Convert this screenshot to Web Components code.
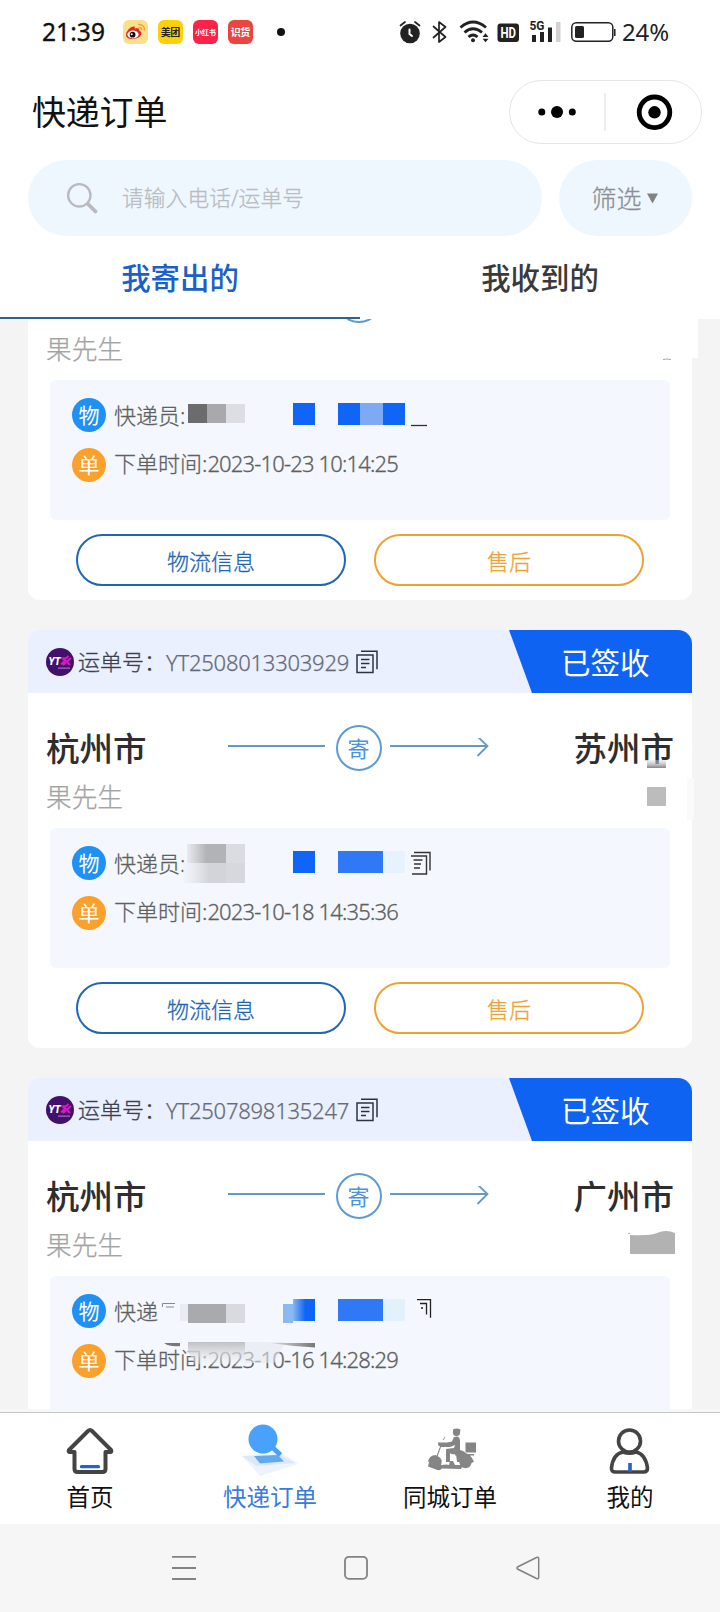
<!DOCTYPE html>
<html lang="zh-CN">
<head>
<meta charset="utf-8">
<title>快递订单</title>
<style>
html,body{margin:0;padding:0;background:#fff}
body{width:720px;height:1612px;overflow:hidden;font-family:"Noto Sans","Noto Sans CJK SC",sans-serif;color:#333}
</style>
</head>
<body>
<express-app></express-app>
<script>
const define=(name,css,html,setup)=>{
  const tpl=document.createElement('template');
  customElements.define(name,class extends HTMLElement{
    connectedCallback(){
      if(this.shadowRoot)return;
      const root=this.attachShadow({mode:'open'});
      tpl.innerHTML='<style>*{box-sizing:border-box}svg{display:block}'+css+'</style>'+(typeof html==='function'?html(this):html);
      root.appendChild(tpl.content.cloneNode(true));
      if(setup)setup(this,root);
    }
  });
};
const at=(el,n)=>el.getAttribute(n)||'';

/* small square launcher icon in the notification area */
define('app-badge',`
:host{display:flex;width:24.5px;height:24px;border-radius:6px;align-items:center;justify-content:center;overflow:hidden;
font:700 10px/24px "Noto Sans CJK SC",sans-serif;white-space:nowrap;letter-spacing:-.4px}`,'<slot></slot>');

define('status-bar',`
:host{display:flex;height:64px;padding:0 50px 0 42px;align-items:center;color:#111}
.time{font-size:24.5px;line-height:64px;width:64px;-webkit-text-stroke:.35px}
.apps{display:flex;gap:10.5px;margin-left:17px}
.dot{width:8px;height:8px;border-radius:50%;background:#111;margin-left:24px}
.sys{display:flex;align-items:center;margin-left:auto}
.sys svg{margin-right:-4px}
.pct{font-size:24px;line-height:64px;color:#222;width:48px}
`,`
<span class="time"><fit-text width="63">21:39</fit-text></span>
<div class="apps">
<app-badge style="background:#fbe08b"><svg width="24" height="24" viewBox="0 0 24 24"><path d="M3 15c0-4 5-9 8-8.500 1 .2 1 1.500.7 2.300 3-1 5-.5 4.700 2 3 1.500 2.300 4 .6 5.700-3 3-14 4-14-1.500z" fill="#d92a25"/><ellipse cx="10" cy="14.500" rx="5.600" ry="3.900" fill="#fff"/><circle cx="9.600" cy="14.700" r="2.900" fill="#111"/><circle cx="8.700" cy="14.200" r="1" fill="#fff"/><path d="M15.500 7.500c2-.3 3.300 1 3 3M15 4.500c4-.7 7 2 6.300 6" fill="none" stroke="#f0a33a" stroke-width="1.500"/></svg></app-badge>
<app-badge style="background:#fdd106;color:#222">美团</app-badge>
<app-badge style="background:#fb2448;color:#fff;font-size:7.200px">小红书</app-badge>
<app-badge style="background:#ea453e;color:#fff">识货</app-badge>
</div>
<span class="dot"></span>
<div class="sys">
<svg width="227" height="24" viewBox="400 20 227 24">
<circle cx="411" cy="33.500" r="9.800" fill="#222"/>
<g fill="none" stroke="#222" stroke-width="1.700" stroke-linecap="round"><path d="M401.500 25.500l4.500-3.500M416 22l4.500 3.500"/><path d="M410.500 29.500v4.500l2.500 2" stroke="#fff" stroke-width="2"/><path d="M434.500 26.500l12 10.500-6.500 5V22l6.500 5-12 10.500" stroke-linejoin="round"/></g>
<g fill="none" stroke="#222" stroke-width="2.900"><path d="M461.500 27.500q12.500-11 25.500 0M465.500 32.500q8.500-7.500 17.500 0M469.500 37q4.500-4 9 0"/></g>
<circle cx="474" cy="40.300" r="2" fill="#222"/><path d="M483.500 37l3-3.800 3 3.800zM483.500 38.800h6l-3 3.500z" fill="#222"/>
<rect x="498.500" y="23.500" width="21.500" height="18.500" rx="3" fill="#222"/>
<text x="509.200" y="37.700" font-family="Roboto" font-size="14" font-weight="700" fill="#fff" text-anchor="middle" textLength="15.500" lengthAdjust="spacingAndGlyphs">HD</text>
<text x="530.500" y="30" font-family="Roboto" font-size="12.500" font-weight="700" fill="#222" textLength="15" lengthAdjust="spacingAndGlyphs">5G</text>
<g fill="#222"><rect x="533" y="35" width="4" height="7"/><rect x="541" y="32" width="4" height="10"/><rect x="549" y="27.500" width="4" height="14.500"/></g><rect x="557" y="22" width="4.500" height="20" fill="#d2d2d2"/>
<rect x="572.800" y="22.800" width="41" height="18.400" rx="4.500" fill="none" stroke="#222" stroke-width="1.500"/><rect x="576" y="26" width="9" height="12" rx="1.500" fill="#222"/><path d="M615.800 29v7" stroke="#222" stroke-width="1.500"/>
</svg>
<span class="pct"><fit-text width="47">24%</fit-text></span>
</div>`);

define('title-bar',`
:host{display:flex;height:96px;padding:16px 18px 0 32px;justify-content:space-between;align-items:flex-start;color:#111}
h1{margin:0;font-weight:400;font-size:34px;line-height:65px;letter-spacing:-.2px}
.capsule{width:193px;height:64px;border:1px solid #e6e6e6;border-radius:32px}`,`
<h1>快递订单</h1>
<svg class="capsule" viewBox="510.500 81 191 62"><g fill="#000"><circle cx="542.300" cy="112" r="3.500"/><circle cx="557.500" cy="112" r="6"/><circle cx="572.800" cy="112" r="3.500"/><circle cx="655" cy="112.300" r="6.200"/></g><path d="M605.500 93v38" stroke="#ddd"/><circle cx="655" cy="112.300" r="15.300" fill="none" stroke="#000" stroke-width="4.800"/></svg>`);

define('search-row',`
:host{display:flex;height:76px;margin:0 28px;gap:17px}
div{display:flex;align-items:center;background:#eff7fe;border-radius:38px;height:76px}
.q{flex:1;padding-left:37px;color:#b9bcc2;font-size:21.7px;font-weight:300;-webkit-text-stroke:.3px}
.q span{margin:-4px 0 0 23px}
.f{width:133px;justify-content:center;color:#8b8f94;font-size:25px;gap:5px;font-weight:300;-webkit-text-stroke:.3px}
.f span{margin-top:-3px}
.f svg{margin-right:2px}`,`
<div class="q"><svg width="34" height="34" viewBox="65 180 34 34" fill="none" stroke="#b9b9be"><circle cx="79.300" cy="194.300" r="11.200" stroke-width="2.300"/><path d="M88 203l7.500 7.500" stroke-width="3.800" stroke-linecap="round"/></svg><span><fit-text width="182">请输入电话/运单号</fit-text></span></div>
<div class="f"><span>筛选</span><svg width="11" height="11"><path d="M0 0.500h11L5.500 10.500z" fill="#808285"/></svg></div>`);

define('order-tabs',`
:host{display:flex;height:83px}
div{flex:1;text-align:center;font-size:29.4px;line-height:84px;height:83px;border-bottom:2.500px solid transparent;font-weight:500;color:#3a3a3a}
div.on{color:#1b5fc8;border-color:#2a6394}`,
`<div class="on">我寄出的</div><div>我收到的</div>`);

/* stacked-sheets copy glyph */
const copyIcon=`<svg width="22" height="24" viewBox="0 0 22 24" fill="none" stroke="#2c3440" stroke-width="1.500"><path d="M5 1.200h16v18M1 5h16v17.500H1zM5 9.500h8.500M5 13.500h8.500M5 17.500h5"/></svg>`;

define('parcel-head',`
:host{display:flex;height:63px;background:#eaf0fe;border-radius:10px 14px 0 0;overflow:hidden;align-items:center;padding-left:18px}
.label{font-size:22px;line-height:63px;color:#3c4150;margin-left:4px;width:88px;font-weight:300;-webkit-text-stroke:.3px;white-space:nowrap}
.no{font-size:22px;line-height:62px;color:#666b78;font-weight:300;width:183px;margin-right:7px;-webkit-text-stroke:.25px}
.state{margin-left:auto;width:183px;height:63px;background:#0f63f3;clip-path:polygon(0 0,100% 0,100% 100%,23px 100%);color:#fff;font-size:29.5px;line-height:65px;padding-left:52px}`,
el=>at(el,'no')?`<svg width="28" height="28" viewBox="0 0 28 28"><circle cx="14" cy="14" r="14" fill="#43106b"/><text x="2.500" y="17" font-family="Roboto" font-size="10" font-weight="900" font-style="italic" fill="#fff" textLength="12">YT</text><path d="M15 16.500l4-4-2.500-2 4-.5 2-2M19 12l5 5M25 10l-8 7" stroke="#d31bc1" stroke-width="2" fill="none"/><path d="M12 20.200h12" stroke="#a56bb8" stroke-width="1.200"/></svg>
<span class="label">运单号：</span><span class="no"><fit-text width="183">${at(el,'no')}</fit-text></span>${copyIcon}<span class="state">已签收</span>`:'');

define('parcel-route',`
:host{display:grid;grid-template-columns:182px 261px 1fr;height:72px;margin:19px 18px 0 18px;align-items:center}
b{font-weight:500;font-size:33.500px;line-height:71px;color:#2e2e2e}
b.to{text-align:right}
.mid{display:flex;align-items:center;height:46px}
i{font-style:normal;width:46px;height:46px;border:2px solid #5e9bd0;border-radius:50%;text-align:center;font-size:22px;line-height:42px;color:#4a93d6;margin:0 8.500px 0 10.500px}`,
el=>`<b>${at(el,'from')}</b><div class="mid"><svg width="97" height="20"><path d="M0 8h97" stroke="#6599c4" stroke-width="2"/></svg><i>${at(el,'from')?'寄':''}</i><svg width="99" height="20" fill="none" stroke="#6599c4" stroke-width="1.800"><path d="M0 8h97M87.500-1.500l10 9.500-10 10" /></svg></div><b class="to">${at(el,'to')}</b>`);

define('info-line',`
:host{display:flex;align-items:center;height:34px;color:#606060;font-size:22px;font-weight:300;-webkit-text-stroke:.3px}
i{font-style:normal;width:34px;height:34px;border-radius:50%;color:#fff;text-align:center;line-height:34px;font-size:21px;margin-right:8px;font-weight:400;-webkit-text-stroke:0}
span{line-height:32px;margin-top:var(--lift,0px)}`,
el=>`<i style="background:${at(el,'tint')}">${at(el,'mark')}</i><span><slot></slot></span>`);

define('pill-button',`
:host{display:block;width:270px;height:52px;border:2px solid currentColor;border-radius:26px;text-align:center;font-size:22px;line-height:51px;font-weight:300;-webkit-text-stroke:.3px}`,'<slot></slot>');

define('parcel-card',`
:host{display:block;position:relative;width:664px;height:418px;background:#fff;border-radius:10px 14px 12px 12px;flex:none}
.who{font-size:25.700px;line-height:36px;height:36px;margin:-4px 18px 0;color:#a3a3a3;font-weight:300;-webkit-text-stroke:.25px}
.panel{margin:12px 22px 0;height:140px;background:#f4f8fe;border-radius:6px;padding:18px 22px}
.panel info-line+info-line{margin-top:16px;--lift:-5px}
.acts{display:flex;gap:28px;padding:14px 48px 0}
::slotted(svg){position:absolute;left:0;top:0;overflow:visible}`,
el=>`<parcel-head no="${at(el,'no')}"></parcel-head>
<parcel-route from="${at(el,'from')}" to="${at(el,'to')}"></parcel-route>
<div class="who">果先生</div>
<div class="panel"><info-line tint="#2090f3" mark="物">${at(el,'courier')}</info-line><info-line tint="#faa02d" mark="单">下单时间:<fit-text width="190.500">${at(el,'time')}</fit-text></info-line></div>
${el.hasAttribute('folded')?'':'<div class="acts"><pill-button style="color:#2166b5">物流信息</pill-button><pill-button style="color:#efa133">售后</pill-button></div>'}
<slot></slot>`);

define('tab-item',`
:host{display:flex;flex-direction:column;align-items:center;width:180px;height:111px;padding-top:9px;font-size:23.500px;color:#111}
span{line-height:34px;margin-top:1px}`,'<slot name="icon"></slot><span><slot></slot></span>');

define('bottom-tabs',`
:host{display:flex;height:115px;background:#fff;border-top:3px solid #f6f7f9;position:relative;flex:none}
nav{display:flex;border-top:1px solid #c6c6c6;width:720px}`,`
<nav>
<tab-item><svg slot="icon" width="60" height="57" viewBox="60 1422 60 57" fill="none" stroke="#444" stroke-width="4" stroke-linejoin="round" stroke-linecap="round"><path d="M88 1431q2-2 4 0l19 19q1 2-1 2h-4.500v17q0 3-3 3h-25q-3 0-3-3v-17h-4.500q-2 0-1-2z"/><path d="M81.500 1466.700h17" stroke="#2265c4" stroke-width="3.300"/></svg>首页</tab-item>
<tab-item style="color:#3b7bdd"><svg slot="icon" width="60" height="57" viewBox="240 1422 60 57"><path d="M242 1456l38-5 18 13-38 12z" fill="#eef4fe"/><path d="M242 1456l38-1 16 8-40 3z" fill="#dbe8fb"/><path d="M254 1456l24-1 6 6.500-24 2z" fill="#62a9f1"/><circle cx="263" cy="1439" r="14.500" fill="#48a2fb"/><path d="M271 1446l9.500 9" stroke="#48a2fb" stroke-width="5"/></svg>快递订单</tab-item>
<tab-item><svg slot="icon" width="60" height="57" viewBox="420 1422 60 57" fill="#858585"><circle cx="456.500" cy="1432.500" r="3.600"/><path d="M453 1429.500q3.500-2 7.500 0l-.5 3h-7zM454 1437q6-2 6 4v9q5 1 6 4l1 4q-1 4-6 4h-4l-1-8q-5 1-6-1v9h-4v-13l8-1 1-3-5 2h-9l-4 11 4 7q6-1 8 0l1-4h3l2 4h8l-2 4-19-.5q-2 3-6 1l-8-3q1-8 8-9l4-11-2-1.500v-2.500h9l5-1z"/><circle cx="435.500" cy="1462" r="6.200"/><circle cx="465.500" cy="1462" r="6.200"/><path d="M428 1462q1-7 8-7l3 4zM458 1457q8-8 14 1l2 4-6 2zM465.500 1442.500H476v10h-10.500zM455 1454h19v1.500h-19z"/><path d="M443 1440l2-3" stroke="#999"/><path d="M442.500 1457q3-5 3-8" stroke="#fff" stroke-width="1.500" fill="none"/></svg>同城订单</tab-item>
<tab-item><svg slot="icon" width="60" height="57" viewBox="600 1422 60 57" fill="none" stroke="#444" stroke-width="3.600"><circle cx="629.500" cy="1441" r="11"/><path d="M623 1452q-10 2-11.500 16-.5 4 4 4h28q4 0 4-4-2-14-11.500-16-6.500 2.500-13 0z" stroke-linejoin="round"/><path d="M630 1463v9" stroke="#2a5bd0"/></svg>我的</tab-item>
</nav>`);

define('system-nav',`
:host{display:flex;height:88px;background:#f6f6f6;align-items:center;justify-content:center;flex:none}
svg{margin-left:-8px}`,`
<svg width="368" height="26" viewBox="172 1555 368 26" fill="none" stroke="#828282" stroke-width="1.800"><path d="M172 1556.800h24M172 1568h24M172 1579h24"/><rect x="345" y="1556.800" width="22" height="22" rx="4"/><path d="M517.500 1567q-1.200 1 0 2l19 9.500q2.200.8 2.200-1.500v-18q0-2.500-2.200-1.500z" stroke-width="1.500"/></svg>`);

define('express-app',`
:host{display:flex;flex-direction:column;width:720px;height:1612px;background:#fff;overflow:hidden}
header{flex:none;height:319px;background:#fff;position:relative;z-index:1}
main{flex:1;min-height:0;overflow:hidden;background:#f4f4f4}
.list{display:flex;flex-direction:column;gap:30px;margin:-137px 28px 0}`,`
<header><status-bar></status-bar><title-bar></title-bar><search-row></search-row><order-tabs></order-tabs></header>
<main><div class="list">
<parcel-card courier="快递员:" time="2023-10-23 10:14:25"><svg width="664" height="418" viewBox="28 182 664 418"><path d="M640 319h58v39h-58z" fill="#fff"/><path d="M663 359.500q4-1 8 0" stroke="#aaa" fill="none"/><path d="M188 404h19v19h-19z" fill="#6c6c6e"/><path d="M207 404h19v19h-19z" fill="#a9a9ad"/><path d="M226 404h19v19h-19z" fill="#dddee4"/><path d="M293 403h22v22h-22zM338 403h22v22h-22zM383 403h22v22h-22z" fill="#0f65f6"/><path d="M360 403h23v22h-23z" fill="#7eaaf5"/><path d="M411 425.500h16" stroke="#333" stroke-width="1.300"/></svg></parcel-card>
<parcel-card no="YT2508013303929" from="杭州市" to="苏州市" courier="快递员:" time="2023-10-18 14:35:36"><svg width="664" height="418" viewBox="28 630 664 418"><defs><linearGradient id="a" y2="1" x2="0"><stop stop-color="#ddd" stop-opacity=".4"/><stop offset="1" stop-color="#858585"/></linearGradient><linearGradient id="b"><stop stop-color="#e9ebf0"/><stop offset=".5" stop-color="#b2b3b7"/></linearGradient><linearGradient id="c"><stop stop-color="#f0f3f8" stop-opacity=".6"/><stop offset=".6" stop-color="#d2d4d9"/></linearGradient></defs><path d="M647 760h19v8h-19z" fill="url(#a)"/><path d="M647 787h19v19h-19z" fill="#bcbcbc"/><path d="M687 778h7v42h-7z" fill="#fafafa"/><path d="M187 844h39v19h-39z" fill="url(#b)"/><path d="M183 863h43v20h-43z" fill="url(#c)"/><path d="M226 844h19v19h-19z" fill="#dbdce1"/><path d="M226 863h19v20h-19z" fill="#d6d8de"/><path d="M293 851h22v22h-22z" fill="#0f65f6"/><path d="M338 851h45v22h-45z" fill="#3079f6"/><path d="M383 851h22v22h-22z" fill="#e6f2fd"/><path d="M414 852.500h16v18M411 856h15.500v18H412M413.500 860h9M414 864h7M414 868h6" fill="none" stroke="#333" stroke-width="1.400"/></svg></parcel-card>
<parcel-card folded no="YT2507898135247" from="杭州市" to="广州市" courier="快递" time="2023-10-16 14:28:29"><svg width="664" height="334" viewBox="28 1078 664 334"><defs><linearGradient id="d"><stop stop-color="#8abaf0"/><stop offset=".3" stop-color="#8abaf0"/><stop offset=".7" stop-color="#0f65f6"/></linearGradient><linearGradient id="e" y2="1" x2="0"><stop stop-color="#bfc1c4"/><stop offset=".4" stop-color="#d4d7db" stop-opacity=".85"/><stop offset="1" stop-color="#f1f4fa" stop-opacity=".3"/></linearGradient><linearGradient id="f"><stop stop-color="#ddd"/><stop offset="1" stop-color="#777"/></linearGradient></defs><path d="M630 1235q20 1 27-2 9-4 18 0v21h-45zM628 1233h2v1h-2z" fill="#b2b2b2"/><path d="M162.500 1307v-3.500h12.500M166 1307h8" fill="none" stroke="#888"/><path d="M180 1304h8v17h-8z" fill="#e9edf3"/><path d="M188 1304h38v19h-38z" fill="#a9aaae"/><path d="M226 1304h19v19h-19z" fill="#d8dae0"/><path d="M283 1304h10v-5h22v22h-22v2h-10z" fill="url(#d)"/><path d="M338 1299h45v22h-45z" fill="#3079f6"/><path d="M383 1299h22v22h-22z" fill="#e3f1fc"/><path d="M417 1299.700h13.500v18M420 1303.500h6.500v11M421 1308h2" fill="none" stroke="#222" stroke-width="1.300"/><path d="M245 1342h39v3l-10 18h-29z" fill="#e4e7ec" fill-opacity=".6"/><path d="M188 1342h57v22h-50l-7-12z" fill="url(#e)"/><path d="M164 1343h16v3q-10 1-16-3z" fill="#777"/><path d="M270 1343h45v4.500q-20-1-45-4.500z" fill="url(#f)"/></svg></parcel-card>
</div></main>
<bottom-tabs></bottom-tabs>
<system-nav></system-nav>`);

/* text run whose tracking is adjusted to fill a given width */
define('fit-text',':host{display:inline-block;white-space:nowrap}','<slot></slot>',el=>{
  const w=+el.getAttribute('width'),n=el.textContent.length;
  if(!n)return;
  const natural=el.getBoundingClientRect().width;
  el.style.letterSpacing=((w-natural)/n).toFixed(3)+'px';
});
</script>
</body>
</html>
